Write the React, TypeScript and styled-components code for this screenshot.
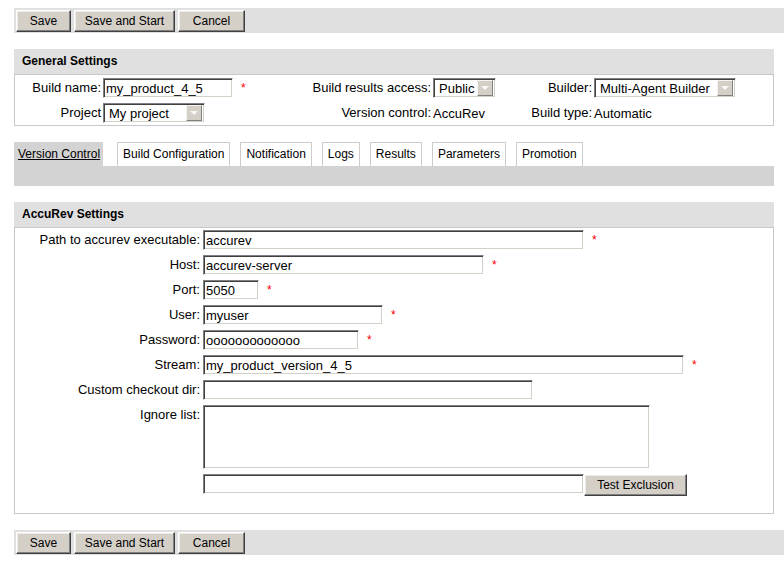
import styled, { createGlobalStyle } from 'styled-components';

const GlobalStyle = createGlobalStyle`
  html, body {
    margin: 0;
    background: #fff;
  }
  body {
    padding: 8px 0 0 14px;
    font-family: "Liberation Sans", Arial, sans-serif;
    color: #000;
    overflow: hidden;
  }
`;

type Field = {
  label: string;
  value: string;
  width: number;
  required?: boolean;
};

const accurevFields: Field[] = [
  { label: 'Path to accurev executable:', value: 'accurev', width: 381, required: true },
  { label: 'Host:', value: 'accurev-server', width: 281, required: true },
  { label: 'Port:', value: '5050', width: 56, required: true },
  { label: 'User:', value: 'myuser', width: 180, required: true },
  { label: 'Password:', value: 'ooooooooooooo', width: 156, required: true },
  { label: 'Stream:', value: 'my_product_version_4_5', width: 481, required: true },
  { label: 'Custom checkout dir:', value: '', width: 330 },
];

const tabs = [
  'Version Control',
  'Build Configuration',
  'Notification',
  'Logs',
  'Results',
  'Parameters',
  'Promotion',
];

const Actions = () => (
  <ButtonBar>
    <Button $width={55}>Save</Button>
    <Button $width={101}>Save and Start</Button>
    <Button $width={67}>Cancel</Button>
  </ButtonBar>
);

const Select = ({ value, width }: { value: string; width: number }) => (
  <SelectBox $width={width}>
    <SelectValue>{value}</SelectValue>
    <DropButton />
  </SelectBox>
);

const App = () => (
  <>
    <GlobalStyle />
    <Page>
      <Actions />

      <Section>
        <SectionHeader>General Settings</SectionHeader>
        <SectionBody>
          <GeneralGrid>
            <Label>Build name:</Label>
            <Value>
              <TextInput $width={130} defaultValue="my_product_4_5" />
              <Required>*</Required>
            </Value>
            <Label>Build results access:</Label>
            <Value>
              <Select value="Public" width={63} />
            </Value>
            <Label>Builder:</Label>
            <Value>
              <Select value="Multi-Agent Builder" width={142} />
            </Value>

            <Label>Project</Label>
            <Value>
              <Select value="My project" width={102} />
            </Value>
            <Label>Version control:</Label>
            <Value>AccuRev</Value>
            <Label>Build type:</Label>
            <Value>Automatic</Value>
          </GeneralGrid>
        </SectionBody>
      </Section>

      <TabRow>
        {tabs.map((tab, i) => (
          <Tab key={tab} $active={i === 0}>
            {tab}
          </Tab>
        ))}
      </TabRow>
      <TabStrip />

      <Section>
        <SectionHeader>AccuRev Settings</SectionHeader>
        <SectionBody>
          <FormGrid>
            {accurevFields.map(f => (
              <FormRow key={f.label}>
                <Label>{f.label}</Label>
                <Value>
                  <TextInput $width={f.width} defaultValue={f.value} />
                  {f.required && <Required>*</Required>}
                </Value>
              </FormRow>
            ))}
            <FormRow>
              <Label $top>Ignore list:</Label>
              <Value>
                <TextArea />
              </Value>
            </FormRow>
            <FormRow>
              <span />
              <Value $top>
                <TextInput $width={381} />
                <Button $width={103}>Test Exclusion</Button>
              </Value>
            </FormRow>
          </FormGrid>
        </SectionBody>
      </Section>

      <BottomActions>
        <Actions />
      </BottomActions>
    </Page>
  </>
);

const Page = styled.div`
  display: flex;
  flex-direction: column;
`;

const ButtonBar = styled.div`
  display: flex;
  gap: 3px;
  height: 25px;
  padding: 2px;
  box-sizing: border-box;
  background: #e0e0e0;
`;

const BottomActions = styled.div`
  margin-top: 16px;
`;

const Button = styled.button<{ $width: number }>`
  flex: none;
  width: ${props => props.$width}px;
  height: 22px;
  padding: 0;
  font: 12px "Liberation Sans", Arial, sans-serif;
  color: #000;
  background: #d4d0c8;
  border: 1px solid;
  border-color: #ffffff #404040 #404040 #ffffff;
  box-shadow:
    inset -1px -1px 0 #808080,
    inset 1px 1px 0 #ecebe6;
  cursor: pointer;
`;

const Section = styled.section`
  margin: 16px 10px 0 0;
`;

const SectionHeader = styled.div`
  height: 25px;
  line-height: 25px;
  padding-left: 8px;
  background: #e0e0e0;
  font-size: 12px;
  font-weight: bold;
`;

const SectionBody = styled.div`
  border: 1px solid #c8c8c8;
`;

const GeneralGrid = styled.div`
  display: grid;
  grid-template-columns: 86px 197px 129px 77px 80px 1fr;
  grid-auto-rows: 20px;
  column-gap: 2px;
  row-gap: 5px;
  align-items: center;
  padding: 3px 0 2px;
`;

const FormGrid = styled.div`
  display: grid;
  grid-template-columns: 185px 1fr;
  column-gap: 3px;
  row-gap: 5px;
  padding: 2px 0 17px;
`;

const FormRow = styled.div`
  display: contents;
`;

const Label = styled.div<{ $top?: boolean }>`
  align-self: ${props => (props.$top ? 'start' : 'center')};
  padding-top: ${props => (props.$top ? '2px' : '0')};
  text-align: right;
  font-size: 13px;
  line-height: 16px;
  white-space: nowrap;
`;

const Value = styled.div<{ $top?: boolean }>`
  display: flex;
  align-items: ${props => (props.$top ? 'flex-start' : 'center')};
  min-height: 20px;
  font-size: 13px;
  white-space: nowrap;
`;

const sunken = `
  box-sizing: border-box;
  border: 1px solid;
  border-color: #808080 #ffffff #ffffff #808080;
  box-shadow:
    inset 1px 1px 0 #404040,
    inset -1px -1px 0 #d4d0c8;
  background: #fff;
`;

const TextInput = styled.input<{ $width: number }>`
  ${sunken}
  flex: none;
  width: ${props => props.$width}px;
  height: 20px;
  margin: 0;
  padding: 0 2px;
  font: 13px "Liberation Sans", Arial, sans-serif;
  color: #000;
  outline: none;
`;

const TextArea = styled.textarea`
  ${sunken}
  width: 447px;
  height: 64px;
  margin: 0;
  padding: 2px;
  resize: none;
  overflow: hidden;
  font: 13px "Liberation Sans", Arial, sans-serif;
  outline: none;
`;

const Required = styled.span`
  margin-left: 8px;
  color: #ff0000;
  font-size: 12px;
`;

const SelectBox = styled.div<{ $width: number }>`
  ${sunken}
  display: flex;
  align-items: center;
  width: ${props => props.$width}px;
  height: 20px;
  padding: 2px;
`;

const SelectValue = styled.span`
  flex: 1;
  padding-left: 3px;
  font-size: 13px;
  overflow: hidden;
`;

const DropButton = styled.span`
  flex: none;
  display: flex;
  align-items: center;
  justify-content: center;
  box-sizing: border-box;
  width: 16px;
  height: 16px;
  background: #d4d0c8;
  border: 1px solid;
  border-color: #f4f3ef #808080 #808080 #f4f3ef;

  &::after {
    content: '';
    border-left: 4px solid transparent;
    border-right: 4px solid transparent;
    border-top: 4px solid #f8f8f8;
  }
`;

const TabRow = styled.div`
  display: flex;
  margin: 16px 10px 0 0;
  height: 24px;
`;

const Tab = styled.div<{ $active?: boolean }>`
  box-sizing: border-box;
  height: 24px;
  line-height: 22px;
  padding: ${props => (props.$active ? '1px 3px 0 4px' : '0 5px')};
  margin-right: ${props => (props.$active ? '14px' : '10px')};
  border: ${props => (props.$active ? 'none' : '1px solid #cccccc')};
  border-bottom: none;
  background: ${props => (props.$active ? '#d3d3d3' : '#fff')};
  font-size: 12px;
  text-decoration: ${props => (props.$active ? 'underline' : 'none')};
  white-space: nowrap;
`;

const TabStrip = styled.div`
  height: 20px;
  margin-right: 10px;
  background: #d3d3d3;
`;

export default App;
